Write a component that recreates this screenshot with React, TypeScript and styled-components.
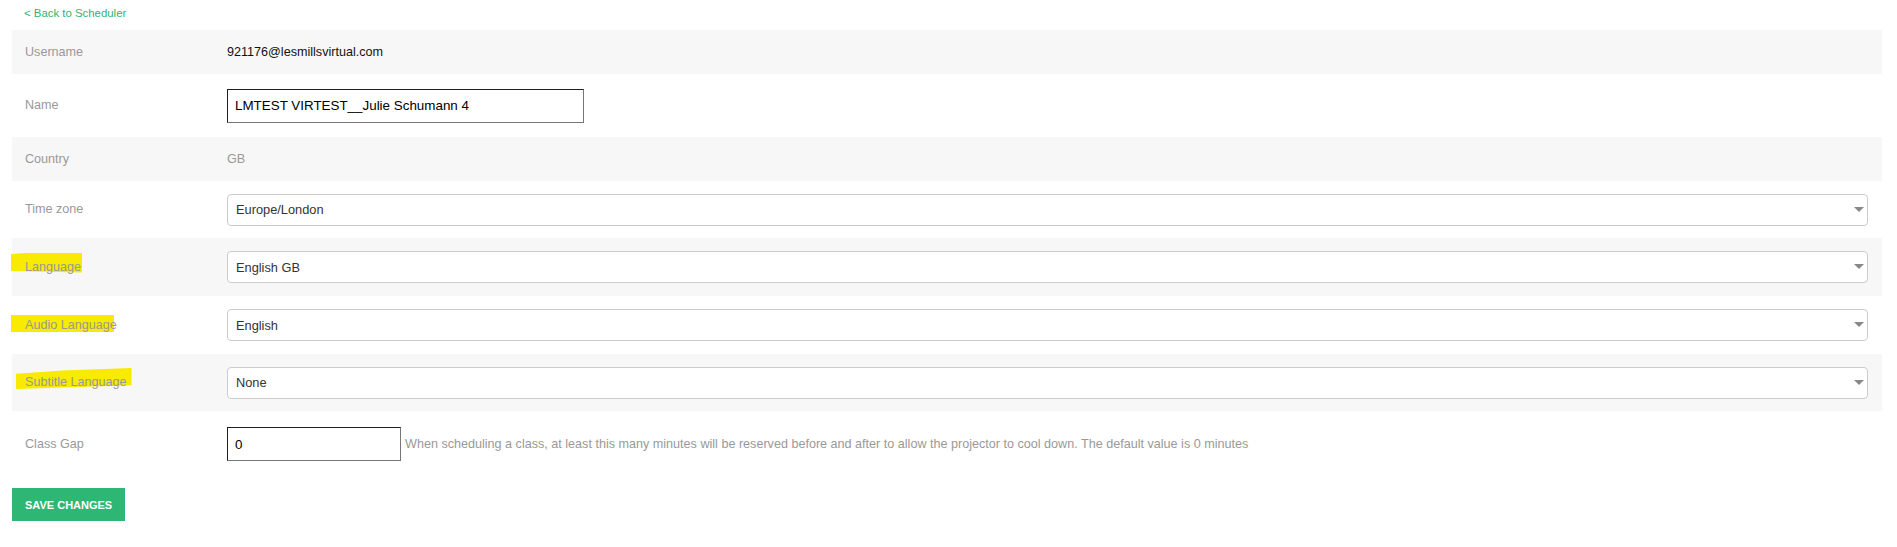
import styled, { createGlobalStyle } from "styled-components";

const GlobalStyle = createGlobalStyle`
  body {
    margin: 0;
    background: #fff;
    font-family: "Liberation Sans", Arial, sans-serif;
  }
`;

const Page = styled.div`
  padding: 0 15px 0 12px;
`;

const BackLink = styled.a`
  display: block;
  height: 30px;
  padding: 7px 0 0 12px;
  box-sizing: border-box;
  font-size: 11.4px;
  color: #2bb673;
  text-decoration: none;
`;

const Row = styled.div<{ $shaded?: boolean; $height: number }>`
  display: grid;
  grid-template-columns: 202px 1fr;
  align-items: center;
  min-height: ${(p) => p.$height}px;
  padding: 0 14px 0 13px;
  background: ${(p) => (p.$shaded ? "#f7f7f7" : "#fff")};
`;

const Label = styled.div`
  font-size: 12.6px;
  line-height: 15px;
  color: #999;
`;

const Marker = styled.span<{ $l: number; $r: number; $t: number; $b: number; $clip: string }>`
  position: relative;
  z-index: 0;
  &::before {
    content: "";
    position: absolute;
    z-index: -1;
    left: ${(p) => p.$l}px;
    right: ${(p) => p.$r}px;
    top: ${(p) => p.$t}px;
    bottom: ${(p) => p.$b}px;
    background: #f8ea00;
    clip-path: ${(p) => p.$clip};
  }
`;

const Value = styled.div<{ $muted?: boolean }>`
  font-size: 12.6px;
  color: ${(p) => (p.$muted ? "#999" : "#111")};
`;

const TextInput = styled.input<{ $width: number }>`
  width: ${(p) => p.$width}px;
  height: 34px;
  box-sizing: border-box;
  padding: 0 7px;
  border: 1px solid;
  border-color: #1f1f1f #767676 #767676 #1f1f1f;
  font-family: inherit;
  font-size: 13.4px;
  color: #000;
  outline: none;
`;

const SelectWrap = styled.div`
  position: relative;
  &::after {
    content: "";
    position: absolute;
    right: 4px;
    top: 13px;
    border-left: 5px solid transparent;
    border-right: 5px solid transparent;
    border-top: 5px solid #888;
    pointer-events: none;
  }
`;

const Select = styled.select`
  appearance: none;
  width: 100%;
  height: 32px;
  box-sizing: border-box;
  padding: 0 8px;
  border: 1px solid #ccc;
  border-radius: 4px;
  background: #fff;
  font-family: inherit;
  font-size: 12.8px;
  color: #333;
`;

const GapField = styled.div`
  display: flex;
  align-items: center;
  gap: 4px;
`;

const Help = styled.span`
  font-size: 12.6px;
  color: #999;
`;

const SaveButton = styled.button`
  margin-top: 11px;
  height: 33px;
  padding: 0 13px;
  border: none;
  background: #2db674;
  color: #fff;
  font-family: inherit;
  font-size: 11px;
  font-weight: bold;
  text-transform: uppercase;
  cursor: pointer;
`;

const selects = [
  {
    label: "Time zone",
    value: "Europe/London",
    shaded: false,
    height: 57,
    mark: null,
  },
  {
    label: "Language",
    value: "English GB",
    shaded: true,
    height: 58,
    mark: { l: -14, r: -1, t: -7, b: 1, clip: "polygon(0 8%, 30% 0, 100% 2%, 100% 100%, 0 92%)" },
  },
  {
    label: "Audio Language",
    value: "English",
    shaded: false,
    height: 58,
    mark: { l: -14, r: 3, t: -3, b: 0, clip: "none" },
  },
  {
    label: "Subtitle Language",
    value: "None",
    shaded: true,
    height: 57,
    mark: { l: -9, r: -5, t: -7, b: 0, clip: "polygon(0 27%, 40% 12%, 100% 0, 100% 82%, 0 100%)" },
  },
];

export default function App() {
  return (
    <>
      <GlobalStyle />
      <Page>
        <BackLink href="#">&lt; Back to Scheduler</BackLink>
        <Row $shaded $height={44}>
          <Label>Username</Label>
          <Value>921176@lesmillsvirtual.com</Value>
        </Row>
        <Row $height={63}>
          <Label>Name</Label>
          <div>
            <TextInput $width={357} defaultValue="LMTEST VIRTEST__Julie Schumann 4" />
          </div>
        </Row>
        <Row $shaded $height={44}>
          <Label>Country</Label>
          <Value $muted>GB</Value>
        </Row>
        {selects.map((s) => (
          <Row key={s.label} $shaded={s.shaded} $height={s.height}>
            <Label>
              {s.mark ? (
                <Marker $l={s.mark.l} $r={s.mark.r} $t={s.mark.t} $b={s.mark.b} $clip={s.mark.clip}>
                  {s.label}
                </Marker>
              ) : (
                s.label
              )}
            </Label>
            <SelectWrap>
              <Select defaultValue={s.value}>
                <option>{s.value}</option>
              </Select>
            </SelectWrap>
          </Row>
        ))}
        <Row $height={66}>
          <Label>Class Gap</Label>
          <GapField>
            <TextInput $width={174} defaultValue="0" />
            <Help>
              When scheduling a class, at least this many minutes will be reserved before and after to allow
              the projector to cool down. The default value is 0 minutes
            </Help>
          </GapField>
        </Row>
        <SaveButton>Save Changes</SaveButton>
      </Page>
    </>
  );
}
